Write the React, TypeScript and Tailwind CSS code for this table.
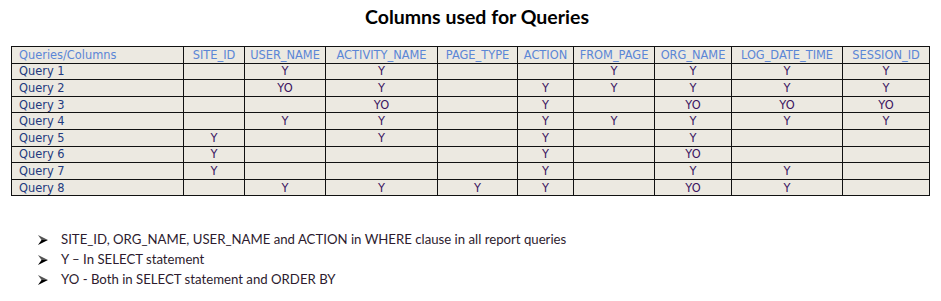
import React from 'react';

type Mark = '' | 'Y' | 'YO';

const columns = [
  'SITE_ID',
  'USER_NAME',
  'ACTIVITY_NAME',
  'PAGE_TYPE',
  'ACTION',
  'FROM_PAGE',
  'ORG_NAME',
  'LOG_DATE_TIME',
  'SESSION_ID',
];

// first width is the Queries/Columns column
const widths = ['w-[172px]', 'w-[61px]', 'w-[81px]', 'w-[112px]', 'w-[80px]', 'w-[56px]', 'w-[81px]', 'w-[77px]', 'w-[111px]', 'w-[87px]'];

const rows: { name: string; marks: Mark[] }[] = [
  { name: 'Query 1', marks: ['', 'Y', 'Y', '', '', 'Y', 'Y', 'Y', 'Y'] },
  { name: 'Query 2', marks: ['', 'YO', 'Y', '', 'Y', 'Y', 'Y', 'Y', 'Y'] },
  { name: 'Query 3', marks: ['', '', 'YO', '', 'Y', '', 'YO', 'YO', 'YO'] },
  { name: 'Query 4', marks: ['', 'Y', 'Y', '', 'Y', 'Y', 'Y', 'Y', 'Y'] },
  { name: 'Query 5', marks: ['Y', '', 'Y', '', 'Y', '', 'Y', '', ''] },
  { name: 'Query 6', marks: ['Y', '', '', '', 'Y', '', 'YO', '', ''] },
  { name: 'Query 7', marks: ['Y', '', '', '', 'Y', '', 'Y', 'Y', ''] },
  { name: 'Query 8', marks: ['', 'Y', 'Y', 'Y', 'Y', '', 'YO', 'Y', ''] },
];

const notes = [
  'SITE_ID, ORG_NAME, USER_NAME and ACTION in WHERE clause in all report queries',
  'Y \u2013 In SELECT statement',
  'YO - Both in SELECT statement and ORDER BY',
];

const Arrow = () => (
  <svg width="10" height="10" viewBox="0 0 10 10" className="shrink-0">
    <polygon points="0,0 10,5 3.5,5" fill="#555" />
    <polygon points="0,10 10,5 3.5,5" fill="#000" />
  </svg>
);

const App: React.FC = () => {
  return (
    <div className="w-[941px] h-[301px] bg-white overflow-hidden flex flex-col">
      <h1 className="pt-[4px] pl-[13px] text-center text-[19.5px] leading-[25px] font-bold text-black font-['Lato','Liberation_Sans',sans-serif]">
        Columns used for Queries
      </h1>

      <table className="mt-[17px] ml-[11px] w-[918px] table-fixed border-collapse bg-[#ece9e1] font-['DejaVu_Sans','Liberation_Sans',sans-serif] text-[11.4px]">
        <colgroup>
          {widths.map((w, i) => (
            <col key={i} className={w} />
          ))}
        </colgroup>
        <thead>
          <tr className="h-[16.6px]">
            <th className="border border-[#111] px-[7px] py-0 text-left font-normal leading-[14px] text-[#5b86d6]">
              Queries/Columns
            </th>
            {columns.map((c) => (
              <th key={c} className="border border-[#111] p-0 text-center font-normal leading-[14px] text-[#5b86d6] whitespace-nowrap">
                {c}
              </th>
            ))}
          </tr>
        </thead>
        <tbody>
          {rows.map((r) => (
            <tr key={r.name} className="h-[16.6px]">
              <td className="border border-[#111] px-[7px] py-0 leading-[14px] text-[#23397e]">{r.name}</td>
              {r.marks.map((m, i) => (
                <td key={i} className="border border-[#111] p-0 text-center leading-[14px] text-[#3a1460]">
                  {m}
                </td>
              ))}
            </tr>
          ))}
        </tbody>
      </table>

      <ul className="mt-[34px] pl-[38px] flex flex-col font-['Lato','Liberation_Sans',sans-serif] text-[13.2px] text-[#2d1b2e]">
        {notes.map((n) => (
          <li key={n} className="flex items-center gap-[13px] h-[20px]">
            <Arrow />
            <span>{n}</span>
          </li>
        ))}
      </ul>
    </div>
  );
};

export default App;
